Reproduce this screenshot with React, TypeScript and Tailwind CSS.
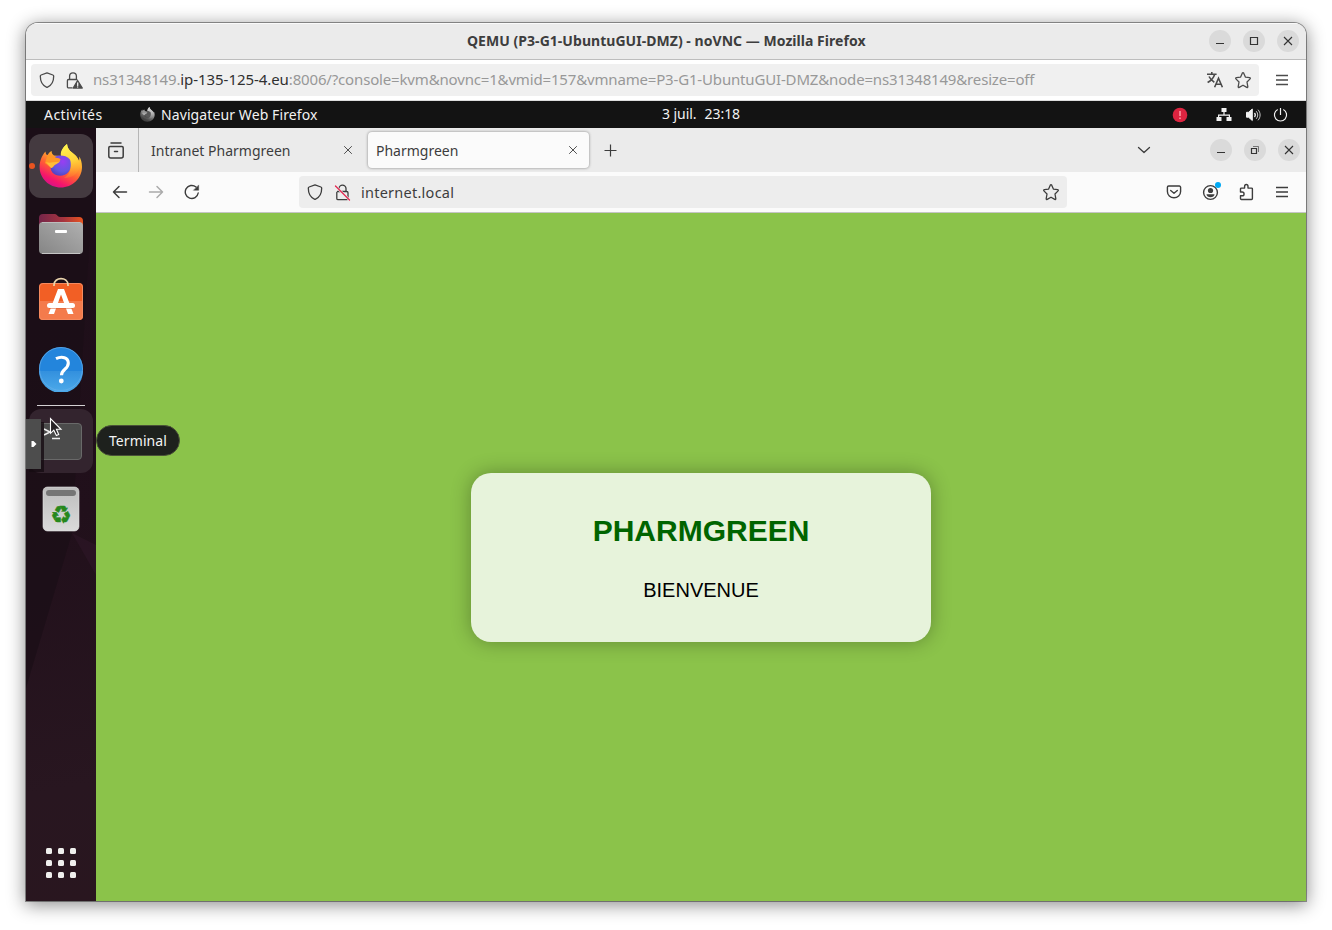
import React from "react";

type IconProps = { className?: string };

const stroke = {
  fill: "none",
  stroke: "currentColor",
  strokeWidth: 1.3,
  strokeLinecap: "round" as const,
  strokeLinejoin: "round" as const,
};

const Shield = ({ className = "" }: IconProps) => (
  <svg width="16" height="16" viewBox="0 0 16 16" className={`shrink-0 ${className}`} {...stroke}>
    <path d="M8 .9 13.900 3c.5.2.8.6.8 1.100 0 5.500-2 9.200-6.100 11a1.500 1.500 0 0 1-1.200 0C3.300 13.300 1.300 9.600 1.300 4.100c0-.5.3-.9.8-1.100Z" />
  </svg>
);

const LockWarning = () => (
  <svg width="17" height="17" viewBox="0 0 17 17" className="shrink-0" {...stroke}>
    <path d="M3.600 7.500V4.300a3.400 3.400 0 0 1 6.800 0v3.200M6 15.900H2.600a1.200 1.200 0 0 1-1.200-1.200V8.700a1.200 1.200 0 0 1 1.200-1.200h8.300" />
    <path d="M11.600 8.500 16.300 16H7.200Z" fill="currentColor" />
    <path d="M11.700 11v2.400M11.700 14.900v.1" stroke="#f0f0f0" />
  </svg>
);

const LockOff = () => (
  <svg width="17" height="17" viewBox="0 0 17 17" className="shrink-0" {...stroke}>
    <path d="M5 7.500V4.600a3.500 3.500 0 0 1 7 0v2.900M3.500 7.500h9.200a1.300 1.300 0 0 1 1.300 1.300v5.600a1.300 1.300 0 0 1-1.300 1.300H4.100a1.300 1.300 0 0 1-1.300-1.300V8.300" />
    <path d="M2.500 3.100 15.500 16" stroke="#ededed" strokeWidth="2.400" />
    <path d="M1.500 2 15.500 16" stroke="#e22850" />
  </svg>
);

const Star = () => (
  <svg width="18" height="18" viewBox="0 0 18 18" className="shrink-0" {...stroke}>
    <path d="M8.400 1.900a.7.7 0 0 1 1.200 0l1.900 4.300 4.200.5a.7.7 0 0 1 .4 1.200L13 11l.8 4.700a.7.7 0 0 1-1 .7L9 14.200l-3.800 2.200a.7.7 0 0 1-1-.7L5 11 1.900 7.900a.7.7 0 0 1 .4-1.200l4.200-.5Z" />
  </svg>
);

const Translate = () => (
  <svg width="18" height="18" viewBox="0 0 18 18" className="shrink-0 translate-x-px" fill="none" stroke="currentColor" strokeWidth="1.600">
    <path d="M1 3.200h9.600M5.800 1v2.200M8.600 3.400C7.500 7 5 9.600 1.600 11.500M3 5.500c1.100 2.200 3 4.300 5.300 5.700" />
    <path d="M8.600 16.200 12.500 7.300 16.400 16.200M10 13.200h5" />
  </svg>
);

const Menu = () => (
  <svg width="14" height="14" viewBox="0 0 14 14" className="shrink-0" stroke="currentColor" strokeWidth="1.300">
    <path d="M1 2.500h12M1 7h12M1 11.500h12" />
  </svg>
);

const Close = ({ className = "" }: IconProps) => (
  <svg width="10" height="10" viewBox="0 0 10 10" className={`shrink-0 ${className}`} stroke="currentColor" strokeWidth="1.100">
    <path d="m1 1 8 8M9 1 1 9" />
  </svg>
);

const TabClose = () => (
  <svg width="10" height="10" viewBox="0 0 10 10" className="shrink-0" stroke="currentColor" strokeWidth=".9">
    <path d="m1.200 1.200 7.600 7.600M8.800 1.200 1.200 8.800" />
  </svg>
);

const FirefoxMark = ({ gray = false, size }: { gray?: boolean; size: number }) => {
  const id = gray ? "g" : "c";
  return (
    <svg width={size} height={size} viewBox="0 0 44 44" className={gray ? "shrink-0 brightness-90 grayscale" : "shrink-0"}>
      <defs>
        <linearGradient id={`${id}a`} x1=".8" y1="0" x2=".3" y2="1">
          <stop offset="0" stopColor="#fff44f" />
          <stop offset=".35" stopColor="#ffb02e" />
          <stop offset=".62" stopColor="#ff5a36" />
          <stop offset=".85" stopColor="#f5156c" />
          <stop offset="1" stopColor="#d3128a" />
        </linearGradient>
        <linearGradient id={`${id}b`} x1=".5" y1="0" x2=".7" y2="1">
          <stop offset="0" stopColor="#fff44f" />
          <stop offset=".5" stopColor="#ffd23a" />
          <stop offset="1" stopColor="#ff8a2b" stopOpacity=".2" />
        </linearGradient>
        <radialGradient id={`${id}c`} cx=".6" cy=".3" r=".8">
          <stop offset="0" stopColor="#9a3df2" />
          <stop offset=".6" stopColor="#6257e0" />
          <stop offset="1" stopColor="#4e3bb8" />
        </radialGradient>
      </defs>
      <path
        d="M28 0c-3 2.500-6 6-6 12l-7-.5c-1.800-1-2.500-2.800-2.300-4.500C10.600 8 9.400 9.500 8.600 11c-1.400-.2-2-1.300-2-3.600C2.500 11.500.6 17.500.6 23c0 11.500 9.600 20.500 21.200 20.500S43 34.400 43 23c0-4.500-1.100-8-2.800-10.500.2 1.600.2 3-.2 4.500C38.500 13 36 10.700 33 8.500 30.500 6.600 28.300 4 28 0Z"
        fill={`url(#${id}a)`}
      />
      <path d="M28 0c-4 3-7 7.500-6 12 4 .5 9 4.500 9.500 10.500.4 5-2.500 9-6.500 11.500C35 34 41 28 41 19.500c-.3-1-.8-2-1-2.500-1.500-4-4-6.300-7-8.500C30.500 6.600 28.300 4 28 0Z" fill={`url(#${id}b)`} />
      <path d="M13 15c3-4.500 13-5 17.500 0 1.800 2.500 2 9-1 13-4 5-12 5-16 .5-2-2.500-2.600-6-.5-13.500Z" fill={`url(#${id}c)`} />
      <path d="M8.600 11c3-.3 6.400.8 8.400 2.800 2.200.1 4 .7 4.500 1.700-.3 2.500-4 3.300-5.500 5-.8 1-1.500 2.500-3.600 3.500L6 19Z" fill="#ff9826" />
      <path d="M7 18c4 1.500 7.500-.2 10.500.1 1.500.1 2.500-.5 3.500-1.600-.5 2.500-3.800 3.600-5 4.300-1.500 1-2 2.700-4 3.200Z" fill="#ffbd38" />
    </svg>
  );
};

const FilesIcon = () => (
  <svg width="46" height="44" viewBox="0 0 46 44">
    <defs>
      <linearGradient id="folderBack" x1="0" y1="0" x2="1" y2="0">
        <stop offset="0" stopColor="#742549" />
        <stop offset=".55" stopColor="#a5343f" />
        <stop offset="1" stopColor="#e95420" />
      </linearGradient>
      <linearGradient id="folderFront" x1="0" y1="1" x2="1" y2="0">
        <stop offset="0" stopColor="#858585" />
        <stop offset="1" stopColor="#b0b0b0" />
      </linearGradient>
    </defs>
    <path d="M1 14V5a4 4 0 0 1 4-4h12c2 0 2.500 3 5 3h19a4 4 0 0 1 4 4v8Z" fill="url(#folderBack)" />
    <rect x="1" y="9" width="44" height="32" rx="4" fill="url(#folderFront)" />
    <path d="M4 40.500h38" stroke="#c5c5c5" />
    <path d="M4 9.500h38" stroke="#bcbcbc" />
    <rect x="17" y="17" width="12" height="3" rx="1" fill="#fff" />
  </svg>
);

const SoftwareIcon = () => (
  <svg width="46" height="46" viewBox="0 0 46 46">
    <rect x="1" y="6" width="44" height="37" rx="4" fill="#f25f25" />
    <path d="M1 24h44v15a4 4 0 0 1-4 4H5a4 4 0 0 1-4-4Z" fill="#f47b4c" />
    <rect x="1.500" y="6.500" width="43" height="36" rx="3.500" fill="none" stroke="#f58a5f" />
    <path d="M16 9V8c0-8.500 14-8.500 14 0v1" fill="none" stroke="#ead5ad" strokeWidth="1.700" />
    <path d="m20 12-9.500 25H16l7-19.500L30 37h5.500L26 12Z" fill="#fff" />
    <rect x="9" y="26" width="28" height="5" rx="2.500" fill="#fff" />
    <path d="M11 31.500h24" stroke="#d9572a" strokeOpacity=".5" />
  </svg>
);

const HelpIcon = () => (
  <svg width="46" height="46" viewBox="0 0 46 46" className="-mt-[2px]">
    <defs>
      <linearGradient id="helpLower" x1="0" y1="0" x2="0" y2="1">
        <stop offset="0" stopColor="#3390de" />
        <stop offset="1" stopColor="#4dabea" />
      </linearGradient>
    </defs>
    <circle cx="23" cy="23" r="22" fill="#2385dc" />
    <path d="M1 25a22 22 0 0 0 44 0Z" fill="url(#helpLower)" />
    <circle cx="23" cy="23" r="21.500" fill="none" stroke="#67aee9" strokeOpacity=".7" />
    <path d="M18 12.700c6-3 12.300-1.200 12.300 4.300 0 6.500-6.800 6-6.800 12.300" fill="none" stroke="#fff" strokeWidth="3.100" />
    <circle cx="23.300" cy="35" r="2.400" fill="#fff" />
  </svg>
);

const TrashIcon = () => (
  <svg width="38" height="46" viewBox="0 0 38 46">
    <defs>
      <linearGradient id="bin" x1="0" y1="0" x2="0" y2="1">
        <stop offset="0" stopColor="#bdbdbd" />
        <stop offset="1" stopColor="#dadada" />
      </linearGradient>
    </defs>
    <rect x="1" y="1" width="36" height="44" rx="4.500" fill="url(#bin)" stroke="#e3e3e3" strokeWidth=".6" />
    <rect x="4" y="4" width="30" height="6" rx="3" fill="#757575" />
    <text x="19" y="37" textAnchor="middle" strokeWidth=".5" className="fill-[#26881c] stroke-[#26881c] font-['DejaVu_Sans',sans-serif] text-[24px]">♻</text>
  </svg>
);

const WindowButton = ({ children }: { children: React.ReactNode }) => (
  <div className="flex size-[22px] items-center justify-center rounded-full bg-[#dadada] text-[#333]">{children}</div>
);

const Minimize = () => (
  <svg width="10" height="10" viewBox="0 0 10 10" stroke="currentColor"><path d="M1 7.500h8" /></svg>
);
const Maximize = () => (
  <svg width="10" height="10" viewBox="0 0 10 10" fill="none" stroke="currentColor" strokeWidth="1.200"><path d="M1.500 1.500h7v7h-7Z" /></svg>
);
const Restore = () => (
  <svg width="10" height="10" viewBox="0 0 10 10" fill="none" stroke="currentColor"><path d="M1.500 3.500h5v5h-5Z" strokeWidth="1.200" /><path d="M3 1.500h5.500V7" strokeOpacity=".6" /></svg>
);

const TitleBar = () => (
  <div className="flex h-[37px] shrink-0 items-center border-b border-[#bdbdbd] bg-[#ebebeb] pr-[7px] shadow-[inset_0_1px_0_#fafafa]">
    <div className="w-[441px] shrink-0" />
    <div className="flex-1 whitespace-nowrap pb-[2px] text-[14px] font-bold tracking-[0.04px] text-[#3d3d3d]">QEMU (P3-G1-UbuntuGUI-DMZ) - noVNC — Mozilla Firefox</div>
    <div className="flex gap-3">
      <WindowButton><Minimize /></WindowButton>
      <WindowButton><Maximize /></WindowButton>
      <WindowButton><Close /></WindowButton>
    </div>
  </div>
);

const AddressBar = () => (
  <div className="flex h-[41px] shrink-0 items-center border-b border-[#ddd] bg-white pl-[5px] pr-[17px] text-[#4b4b4b]">
    <div className="flex h-8 w-[1228px] items-center rounded bg-[#f0f0f0] pl-2 pr-[7px]">
      <Shield />
      <div className="ml-[11px] flex"><LockWarning /></div>
      <div className="ml-[10px] flex-1 whitespace-nowrap pb-[2px] text-[15px] tracking-[-0.165px] text-[#989898]">
        ns31348149.<span className="tracking-[-0.06px] text-[#303030]">ip-135-125-4.eu</span>:8006/?console=kvm&amp;novnc=1&amp;vmid=157&amp;vmname=P3-G1-UbuntuGUI-DMZ&amp;node=ns31348149&amp;resize=off
      </div>
      <div className="flex gap-[11px]"><Translate /><Star /></div>
    </div>
    <div className="ml-auto"><Menu /></div>
  </div>
);

const SystemBar = () => (
  <div className="flex h-[27px] shrink-0 items-center bg-[#131313] text-[14px] text-[#f2f2f2]">
    <div className="w-[114px] pl-[18px] tracking-[0.43px]">Activités</div>
    <FirefoxMark gray size={15} />
    <div className="ml-[6px] w-[501px] whitespace-nowrap tracking-[0.1px]">Navigateur Web Firefox</div>
    <div className="flex flex-1 gap-2 whitespace-nowrap pb-[2px] tracking-[-0.05px]"><span>3 juil.</span><span>23:18</span></div>
    <svg width="16" height="16" viewBox="0 0 16 16"><circle cx="8" cy="8" r="7.300" fill="#dc2440" /><path d="M8 4v5M8 10.500v1.500" stroke="#ff9ea9" strokeWidth="1.500" /></svg>
    <svg className="ml-7" width="16" height="16" viewBox="0 0 16 16" fill="currentColor"><path d="M5.500 1h5v4H8.600v2.500H14V10h1.500v4h-5v-4h2.300V8.700H3.200V10h2.300v4h-5v-4H2V7.500h5.400V5H5.500Z" /></svg>
    <svg className="ml-[13px]" width="16" height="16" viewBox="0 0 16 16" fill="none" stroke="currentColor"><path d="M1.500 5.300h2L7.300 2v11.500L3.500 10.200h-2Z" fill="currentColor" /><path d="M9.500 6c1 1.200 1 2.800 0 4" strokeWidth="1.300" /><path d="M11.200 4.200c2 2.200 2 5.400 0 7.600M13 2.700c2.800 3 2.800 7.600 0 10.600" strokeOpacity=".8" /></svg>
    <svg className="ml-[12px] mr-[17px]" width="16" height="16" viewBox="0 0 16 16" fill="none" stroke="currentColor" strokeWidth="1.200"><path d="M7.500 1v7M4.700 2.500a6.100 6.100 0 1 0 5.600 0" /></svg>
  </div>
);

const Dock = () => (
  <div className="relative isolate flex w-[70px] shrink-0 flex-col bg-[linear-gradient(170deg,#1c0e18_0%,#21101b_50%,#281620_85%,#29161f_100%)] pt-[6px]">
    <svg className="absolute inset-0 -z-10" width="70" height="773" viewBox="0 0 70 773">
      <path d="M0 0h70L46 405 0 560Z" fill="#1b0f17" fillOpacity=".75" />
      <path d="m46 405 24 12v30Z" fill="#30172a" fillOpacity=".5" />
    </svg>
    <div className="relative ml-[3px] flex size-16 items-center justify-center rounded-[12px] bg-[#443a40]">
      <FirefoxMark size={44} />
      <div className="absolute left-0 top-[29px] size-[6px] rounded-full bg-[#e95420]" />
    </div>
    <div className="ml-[3px] mt-1 flex size-16 items-center justify-center pt-px"><FilesIcon /></div>
    <div className="ml-[3px] mt-1 flex size-16 items-center justify-center pb-1"><SoftwareIcon /></div>
    <div className="ml-[3px] mt-1 flex size-16 items-center justify-center"><HelpIcon /></div>
    <div className="ml-[11px] mt-[3px] h-px w-12 bg-[#d3d0d2]" />
    <div className="relative ml-[3px] mt-[3px] flex size-16 items-center justify-center rounded-[12px] bg-[#33242e]">
      <div className="mr-[2px] h-[37px] w-[44px] rounded border border-[#696969] bg-[#4b4b4b]">
        <svg width="24" height="20" viewBox="0 0 24 20" fill="none" stroke="#eee" strokeWidth="1.600"><path d="m5 5 6 3-6 3M13 14.500h8" /></svg>
      </div>
      <div className="absolute left-[-3px] top-[10px] flex h-[50px] w-[15px] items-center justify-center bg-[#4d4d4d] shadow-[3px_3px_0_rgba(21,11,18,0.8)]">
        <svg width="6" height="8" viewBox="0 0 6 8"><path d="M.5 1h2l3 3-3 3h-2Z" fill="#fff" /></svg>
      </div>
      <svg className="absolute left-[20px] top-[8px]" width="15" height="22" viewBox="0 0 15 22"><path d="M1.500 1.500v14.800l3.300-3.100 2.600 5.300 2.300-1L7.400 12.300h4.600Z" fill="#272326" stroke="#fff" strokeWidth="1.100" /></svg>
      <div className="absolute left-[67px] top-[16px] z-10 flex h-[31px] w-[84px] items-center justify-center rounded-full border border-[#4a5238] bg-[#1e211d] text-[14px] tracking-[0.1px] text-[#f4f4f4]">Terminal</div>
    </div>
    <div className="ml-[3px] mt-1 flex size-16 items-center justify-center"><TrashIcon /></div>
    <div className="mb-[23px] ml-5 mt-auto grid w-[30px] grid-cols-3 gap-[6px]">
      {Array.from({ length: 9 }, (_, i) => <div key={i} className="size-[6px] rounded-[1.500px] bg-[#efefed]" />)}
    </div>
  </div>
);

const TabBar = () => (
  <div className="flex h-11 shrink-0 items-center bg-[#ebebeb] pr-[6px] text-[14px] text-[#3d3d3d]">
    <div className="flex h-full w-[43px] items-center border-r border-[#b6b6b6] pl-3">
      <svg width="16" height="17" viewBox="0 0 16 17" {...stroke} strokeWidth="1.500"><path d="M3 1h10M2 4.500h12a1.200 1.200 0 0 1 1.200 1.200v8.300a2 2 0 0 1-2 2H2.800a2 2 0 0 1-2-2V5.700A1.200 1.200 0 0 1 2 4.500ZM6.500 9.500h3" /></svg>
    </div>
    <div className="flex w-[229px] items-center pl-3 pr-[15px]"><span className="flex-1 whitespace-nowrap">Intranet Pharmgreen</span><TabClose /></div>
    <div className="flex h-9 w-[221px] items-center rounded bg-[#fbfbfb] pl-2 pr-[11px] shadow-[0_0_3px_rgba(0,0,0,0.45)]"><span className="flex-1">Pharmgreen</span><TabClose /></div>
    <svg className="ml-[15px]" width="14" height="14" viewBox="0 0 14 14" stroke="currentColor" strokeWidth="1.200"><path d="M6.500 1.500v12M.5 7.500h12" /></svg>
    <svg className="ml-auto mr-[59px]" width="14" height="14" viewBox="0 0 14 14" {...stroke}><path d="m1.500 4.500 5.500 5 5.500-5" /></svg>
    <div className="flex gap-3">
      <WindowButton><Minimize /></WindowButton>
      <WindowButton><Restore /></WindowButton>
      <WindowButton><Close /></WindowButton>
    </div>
  </div>
);

const NavBar = () => (
  <div className="flex h-[41px] shrink-0 items-center border-b border-[#c5c5c5] bg-[#fbfbfb] pl-4 pr-[17px] text-[#3d3d3d]">
    <svg width="16" height="16" viewBox="0 0 16 16" {...stroke} strokeWidth="1.500"><path d="M14.500 8H1.500M7 2.500 1.500 8 7 13.500" /></svg>
    <svg className="ml-5 text-[#ababab]" width="16" height="16" viewBox="0 0 16 16" {...stroke} strokeWidth="1.500"><path d="M1.500 8h13M9 2.500 14.500 8 9 13.500" /></svg>
    <svg className="ml-5" width="16" height="16" viewBox="0 0 16 16" {...stroke} strokeWidth="1.400"><path d="M14.200 9A6.500 6.500 0 1 1 12 3" /><path d="M14.700 1.300v5H9.700Z" fill="currentColor" strokeWidth=".4" /></svg>
    <div className="ml-[99px] flex h-8 w-[768px] items-center rounded bg-[#ededed] px-2 pr-[7px]">
      <Shield />
      <div className="ml-[11px] flex"><LockOff /></div>
      <span className="ml-[10px] flex-1 pt-[2px] text-[14.500px] tracking-[0.25px]">internet.local</span>
      <Star />
    </div>
    <svg className="ml-[99px]" width="16" height="16" viewBox="0 0 16 16" {...stroke} strokeWidth="1.400"><path d="M2.700 2h10.600a1.300 1.300 0 0 1 1.300 1.300V7.500a6.600 6.300 0 0 1-13.200 0V3.300A1.300 1.300 0 0 1 2.700 2ZM4.700 6.500 8 9.300l3.300-2.800" /></svg>
    <div className="relative ml-5 size-[17px]">
      <svg width="17" height="17" viewBox="0 0 17 17" fill="none" stroke="currentColor" strokeWidth="1.400"><circle cx="8.500" cy="8.500" r="6.900" /><circle cx="8.500" cy="6.500" r="2.600" fill="currentColor" stroke="none" /><path d="M4.500 10.300h8c0 4-8 4-8 0Z" fill="currentColor" stroke="none" /></svg>
      <div className="absolute -top-[2px] left-[13px] size-[6px] rounded-full bg-[#00a9f4]" />
    </div>
    <svg className="ml-[19px]" width="17" height="18" viewBox="0 0 17 18" {...stroke} strokeWidth="1.400"><path d="M2.500 8V6a.9.900 0 0 1 .9-.9h3.200V3.500c0-2.600 3.400-2.600 3.400 0v1.600h3.500a.9.900 0 0 1 .9.900v9.600a.9.900 0 0 1-.9.900H3.400a.9.900 0 0 1-.9-.9V12.800h1.600c2.600 0 2.600-3.800 0-3.800H2.500Z" /></svg>
    <div className="ml-auto"><Menu /></div>
  </div>
);

const Page = () => (
  <div className="flex flex-1 items-center justify-center bg-[#8bc34a] font-['Liberation_Sans',sans-serif]">
    <div className="flex h-[169px] w-[460px] flex-col items-center rounded-[20px] bg-[#e7f3db] pt-[41px] shadow-[0_0_20px_rgba(0,0,0,0.3)]">
      <h1 className="text-[30px] font-bold leading-[34px] text-[#006400]">PHARMGREEN</h1>
      <p className="mt-[31px] text-[20px] leading-[23px] text-black">BIENVENUE</p>
    </div>
  </div>
);

export default function App() {
  return (
    <div className="h-[930px] w-[1332px] overflow-hidden bg-white pl-[26px] pt-[23px] font-['Noto_Sans',sans-serif]">
      <div className="h-[878px] w-[1280px] rounded-t-[12px] shadow-[0_0_0_1px_rgba(0,0,0,0.38),0_3px_18px_1px_rgba(0,0,0,0.45)]">
        <div className="flex h-full flex-col overflow-hidden rounded-t-[12px]">
          <TitleBar />
          <AddressBar />
          <SystemBar />
          <div className="flex min-h-0 flex-1">
            <div className="relative z-10 flex"><Dock /></div>
            <div className="flex min-w-0 flex-1 flex-col">
              <TabBar />
              <NavBar />
              <Page />
            </div>
          </div>
        </div>
      </div>
    </div>
  );
}
